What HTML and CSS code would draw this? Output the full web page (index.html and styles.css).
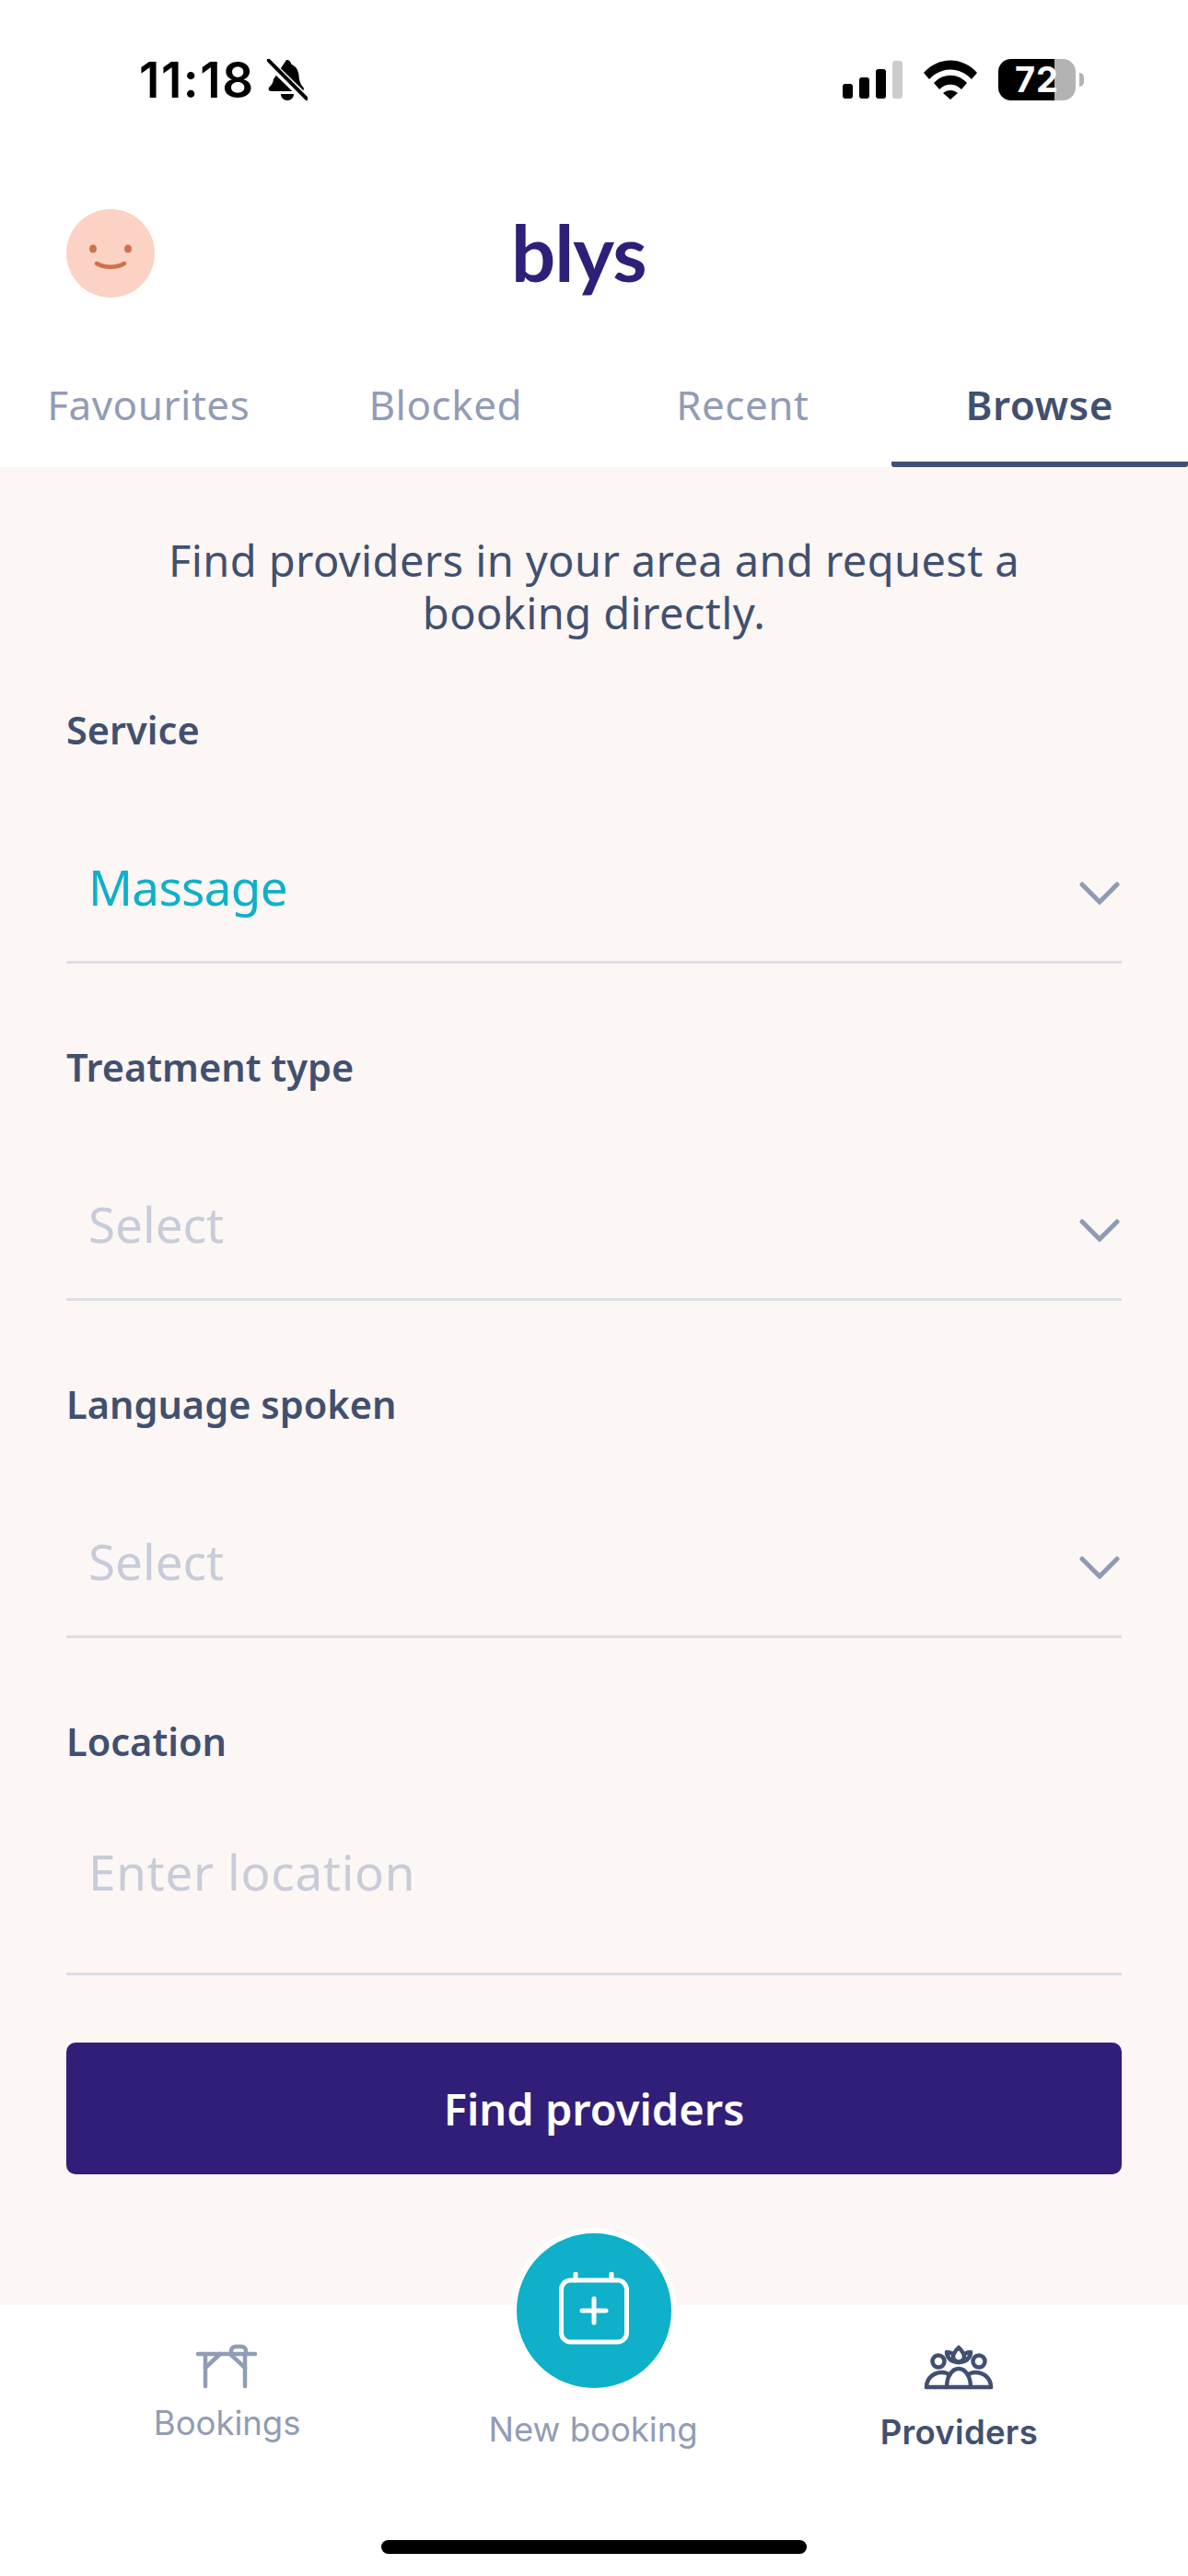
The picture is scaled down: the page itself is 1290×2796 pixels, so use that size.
FILE: index.html
```html
<!DOCTYPE html>
<html lang="en">
<head>
  <meta charset="UTF-8">
  <meta name="viewport" content="width=device-width, initial-scale=1.0">
  <title>Blys - Browse providers</title>
  <link rel="stylesheet" href="styles.css">
</head>
<body>
  <div class="screen">
    <div class="status">
      <div class="status-left">
        <span class="time">11:18</span>
        <svg class="bell" width="44" height="46" viewBox="0 0 44 46">
          <path d="M21 1c3 0 5 2 5.500 5 5 2 7.500 6 8 12 .5 6 1.500 9 5 13 1 2 0 4-2 4H5c-3 0-4-2-3-4 3-3 4.500-5 5-9z" fill="#000"/>
          <path d="M15 38h14c0 4-3 7-7 7s-7-3-7-7z" fill="#000"/>
          <path d="M0 2 43 44" stroke="#fff" stroke-width="9"/>
          <path d="M1 1 43 43" stroke="#000" stroke-width="4" stroke-linecap="round"/>
        </svg>
      </div>
      <div class="status-right">
        <div class="signal">
          <span class="bar bar-1"></span>
          <span class="bar bar-2"></span>
          <span class="bar bar-3"></span>
          <span class="bar bar-4"></span>
        </div>
        <svg class="wifi" width="58" height="43" viewBox="0 0 58 43">
          <path d="M0 14C16-4 42-4 58 14l-6 7C39 7 19 7 6 21z" fill="#000"/>
          <path d="M11 25c10-11 26-11 36 0l-6 7c-7-7-17-7-24 0z" fill="#000"/>
          <path d="M21 36c5-4 11-4 16 0l-8 7z" fill="#000"/>
        </svg>
        <div class="battery">72</div>
      </div>
    </div>

    <div class="header">
      <svg class="avatar" width="96" height="96" viewBox="0 0 96 96">
        <circle cx="48" cy="48" r="48" fill="#fbd2c4"/>
        <ellipse cx="29" cy="43" rx="4" ry="4.500" fill="#d0704a"/>
        <ellipse cx="67" cy="43" rx="4" ry="4.500" fill="#d0704a"/>
        <path d="M33 59c8 5 22 5 30 0" fill="none" stroke="#d0704a" stroke-width="4.500" stroke-linecap="round"/>
      </svg>
      <div class="logo">blys</div>
    </div>

    <div class="tabs">
      <div class="tab">Favourites</div>
      <div class="tab">Blocked</div>
      <div class="tab">Recent</div>
      <div class="tab active">Browse</div>
    </div>

    <div class="content">
      <p class="intro">Find providers in your area and request a<br>booking directly.</p>

      <div class="field">
        <div class="field-label">Service</div>
        <div class="select">
          <span class="value selected">Massage</span>
          <svg class="chevron" width="44" height="25" viewBox="0 0 44 25"><path d="M3 3l19 19L41 3" fill="none" stroke="#8f9ab3" stroke-width="5" stroke-linecap="round"/></svg>
        </div>
      </div>

      <div class="field">
        <div class="field-label">Treatment type</div>
        <div class="select">
          <span class="value">Select</span>
          <svg class="chevron" width="44" height="25" viewBox="0 0 44 25"><path d="M3 3l19 19L41 3" fill="none" stroke="#8f9ab3" stroke-width="5" stroke-linecap="round"/></svg>
        </div>
      </div>

      <div class="field">
        <div class="field-label">Language spoken</div>
        <div class="select">
          <span class="value">Select</span>
          <svg class="chevron" width="44" height="25" viewBox="0 0 44 25"><path d="M3 3l19 19L41 3" fill="none" stroke="#8f9ab3" stroke-width="5" stroke-linecap="round"/></svg>
        </div>
      </div>

      <div class="field">
        <div class="field-label">Location</div>
        <div class="select location">
          <span class="value">Enter location</span>
        </div>
      </div>

      <button class="btn">Find providers</button>
    </div>

    <div class="nav">
      <div class="nav-items">
        <div class="nav-item bookings">
          <svg width="70" height="50" viewBox="0 0 70 50" fill="none" stroke="#919cb5" stroke-width="4.500" stroke-linecap="round" stroke-linejoin="round">
            <path d="M3 11h62"/>
            <path d="M11 11v35M54 11v35"/>
            <path d="M11 26 27 11M54 26 38 11"/>
            <path d="M39 11V8c0-3 2-5 5-5h6c3 0 5 2 5 5v3"/>
          </svg>
          <span class="nav-label">Bookings</span>
        </div>
        <div class="nav-item new">
          <div class="fab">
            <svg width="80" height="84" viewBox="0 0 80 84" fill="none" stroke="#fff" stroke-width="5" stroke-linecap="round">
              <rect x="4.500" y="9" width="71" height="67" rx="10"/>
              <path d="M20 2v7M59 2v7"/>
              <path d="M40 29v26M27 42h26"/>
            </svg>
          </div>
          <span class="nav-label">New booking</span>
        </div>
        <div class="nav-item providers">
          <svg width="80" height="52" viewBox="0 0 80 52" fill="none" stroke="#41506f" stroke-width="4.500" stroke-linecap="round" stroke-linejoin="round">
            <circle cx="18" cy="19" r="6.500"/>
            <circle cx="62" cy="19" r="6.500"/>
            <path d="M40 4c-4 4-6 7-6 10 0 3 3 5 6 6 3-1 6-3 6-6 0-3-2-6-6-10z"/>
            <path d="M34 11c-2-1-4-2-7-2 0 6 5 11 13 11s13-5 13-11c-3 0-5 1-7 2"/>
            <path d="M5 47h70"/>
            <path d="M5 47c0-10 8-16 17-16 3 0 6 1 8 3"/>
            <path d="M27 47c0-12 6-20 13-20s13 8 13 20"/>
            <path d="M50 34c2-2 5-3 8-3 9 0 17 6 17 16"/>
          </svg>
          <span class="nav-label">Providers</span>
        </div>
      </div>
      <div class="home-bar"></div>
    </div>
  </div>
</body>
</html>
```

FILE: styles.css
```css
* {
  margin: 0;
  padding: 0;
  box-sizing: border-box;
}

body {
  font-family: 'Noto Sans', 'Open Sans', sans-serif;
  background: white;
  color: #41506f;
}

.screen {
  width: 1290px;
  height: 2796px;
  display: flex;
  flex-direction: column;
  overflow: hidden;
}

/* status bar */
.status {
  height: 130px;
  padding: 64px 122px 0 151px;
  display: flex;
  justify-content: space-between;
  align-items: flex-start;
  font-family: 'Inter', sans-serif;
  color: black;
}

.status-left {
  display: flex;
  align-items: center;
  gap: 13px;
}

.time {
  font-size: 53px;
  font-weight: 600;
  line-height: 46px;
  letter-spacing: 1.500px;
}

.status-right {
  display: flex;
  align-items: flex-start;
}

.signal {
  display: flex;
  align-items: flex-end;
  gap: 7px;
  height: 41px;
  margin: 2px 23px 0 0;
}

.bar {
  width: 11px;
  background: black;
  border-radius: 3px;
}

.bar-1 { height: 16px; }
.bar-2 { height: 23px; }
.bar-3 { height: 32px; }
.bar-4 { height: 41px; background: #cccccc; }

.wifi {
  margin: 1px 23px 0 0;
}

.battery {
  position: relative;
  width: 84px;
  height: 45px;
  border-radius: 14px;
  background: linear-gradient(90deg, black 0, black 61px, #b3b3b3 61px);
  color: white;
  font-size: 38px;
  font-weight: 700;
  line-height: 45px;
  letter-spacing: 1px;
  text-align: center;
}

.battery::after {
  content: '';
  position: absolute;
  left: 88px;
  top: 15px;
  width: 5px;
  height: 15px;
  background: #b3b3b3;
  border-radius: 0 8px 8px 0;
}

/* header */
.header {
  height: 274px;
  padding: 97px 0 0 72px;
  display: flex;
  align-items: flex-start;
}

.logo {
  margin: -2px 0 0 387px;
  font-family: 'Lato', sans-serif;
  font-size: 85px;
  font-weight: 700;
  line-height: 96px;
  letter-spacing: -1px;
  color: #2f1f78;
}

/* tabs */
.tabs {
  display: flex;
  height: 103px;
}

.tab {
  flex: 1;
  padding-top: 14px;
  font-size: 44px;
  line-height: 42px;
  letter-spacing: 0.500px;
  text-align: center;
  color: #919cb5;
}

.tab.active {
  color: #41506f;
  font-weight: 600;
  border-bottom: 6px solid #41506f;
  border-radius: 3px;
}

/* form */
.content {
  flex: 1;
  background: #fcf6f5;
  padding: 73px 72px 0;
}

.intro {
  font-size: 47px;
  line-height: 57px;
  letter-spacing: 0.400px;
  text-align: center;
  margin-bottom: 74px;
}

.field {
  margin-bottom: 88px;
}

.field:last-of-type {
  margin-bottom: 73px;
}

.field-label {
  font-size: 41.500px;
  font-weight: 600;
  line-height: 48px;
}

.select {
  display: flex;
  justify-content: space-between;
  align-items: center;
  padding: 117px 2px 50px 24px;
  border-bottom: 3px solid #dddfe5;
}

.select.location {
  padding-top: 88px;
  padding-bottom: 79px;
}

.value {
  font-size: 53px;
  line-height: 60px;
  color: #c8ccd8;
}

.select.location .value {
  letter-spacing: 0.700px;
}

.value.selected {
  color: #0fb0c9;
  letter-spacing: -0.700px;
}

.chevron {
  margin-top: 13px;
}

.btn {
  display: block;
  width: 100%;
  height: 143px;
  background: #311e78;
  color: white;
  border: none;
  border-radius: 10px;
  font-family: inherit;
  font-size: 47px;
  font-weight: 600;
}

/* bottom nav */
.nav {
  height: 294px;
  background: white;
}

.nav-items {
  display: flex;
  height: 255px;
  padding: 0 50px 0 48px;
}

.nav-item {
  flex: 1;
  display: flex;
  flex-direction: column;
  align-items: center;
  font-family: 'Inter', sans-serif;
  color: #919cb5;
}

.nav-label {
  font-size: 36.500px;
  line-height: 42px;
}

.bookings { padding-top: 42px; }
.bookings .nav-label { margin-top: 15px; }

.new { margin-top: -84px; }
.new .nav-label { margin-top: 18px; }

.providers {
  padding-top: 42px;
  color: #41506f;
}

.providers .nav-label {
  margin-top: 23px;
  font-weight: 600;
  letter-spacing: 0.300px;
}

.fab {
  width: 180px;
  height: 180px;
  margin-left: 2px;
  border-radius: 50%;
  background: #0fb0c9;
  border: 6px solid white;
  display: flex;
  align-items: center;
  justify-content: center;
}

.home-bar {
  width: 462px;
  height: 15px;
  margin: 0 auto;
  background: black;
  border-radius: 8px;
}
```
